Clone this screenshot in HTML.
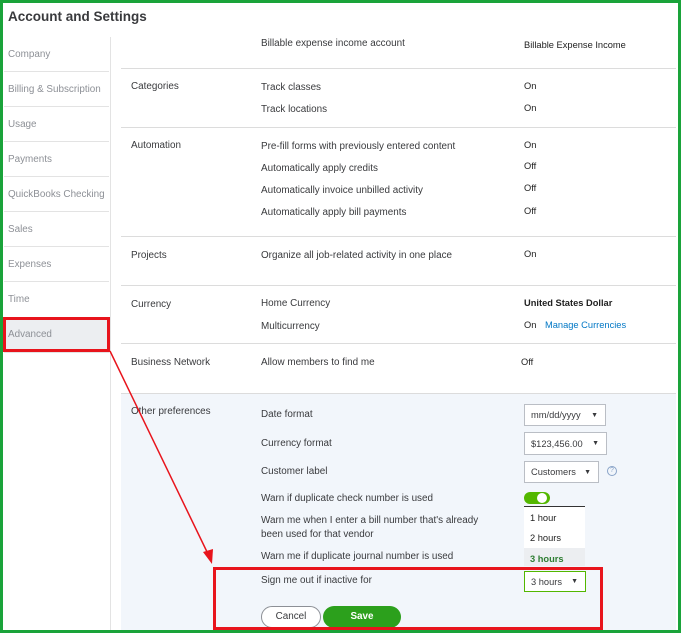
<!DOCTYPE html>
<html><head><style>
*{margin:0;padding:0;box-sizing:border-box}
body{width:681px;height:633px;overflow:hidden;background:#fff;font-family:"Liberation Sans",sans-serif;color:#393a3d;position:relative}
.a{position:absolute;white-space:nowrap}
.t{font-size:9.9px;color:#393a3d}
.h{font-size:9.9px;color:#393a3d}
.v{font-size:9.3px;color:#222}
.sb{font-size:9.9px;color:#8d9096}
.hl{position:absolute;left:121px;width:555px;height:1px;background:#dcdcdc}
.sl{position:absolute;left:4px;width:105px;height:1px;background:#e3e3e3}
.sel{position:absolute;background:#fff;border:1px solid #babec5;font-size:9.3px;color:#393a3d;padding:0 0 0 6px;display:flex;align-items:center}
.sel i{position:absolute;right:7px;font-style:normal;font-size:7px}
</style></head><body>
<div class="a" style="left:0;top:0;width:681px;height:633px;border:3px solid #1aa33a"></div>
<div class="a" style="left:8px;top:9px;font-size:13.5px;font-weight:bold;color:#393a3d">Account and Settings</div>
<div class="a" style="left:110px;top:37px;width:1px;height:593px;background:#e3e3e3"></div>
<div class="a" style="left:4px;top:318px;width:106px;height:34px;background:#eceef1"></div>
<div class="sl" style="top:71px"></div><div class="sl" style="top:106px"></div><div class="sl" style="top:141px"></div><div class="sl" style="top:176px"></div><div class="sl" style="top:211px"></div><div class="sl" style="top:246px"></div><div class="sl" style="top:281px"></div><div class="sl" style="top:317px"></div><div class="sl" style="top:352px"></div>
<div class="a sb" style="left:8px;top:49px">Company</div>
<div class="a sb" style="left:8px;top:84px">Billing &amp; Subscription</div>
<div class="a sb" style="left:8px;top:119px">Usage</div>
<div class="a sb" style="left:8px;top:154px">Payments</div>
<div class="a sb" style="left:8px;top:189px">QuickBooks Checking</div>
<div class="a sb" style="left:8px;top:224px">Sales</div>
<div class="a sb" style="left:8px;top:259px">Expenses</div>
<div class="a sb" style="left:8px;top:294px">Time</div>
<div class="a sb" style="left:8px;top:329px">Advanced</div>
<div class="a" style="left:121px;top:393px;width:555px;height:237px;background:#f2f6fb"></div>
<div class="hl" style="top:68px"></div><div class="hl" style="top:127px"></div><div class="hl" style="top:236px"></div><div class="hl" style="top:285px"></div><div class="hl" style="top:343px"></div><div class="hl" style="top:393px"></div>
<div class="a t" style="left:261px;top:38px">Billable expense income account</div>
<div class="a v" style="left:524px;top:40px">Billable Expense Income</div>
<div class="a h" style="left:131px;top:81px">Categories</div>
<div class="a t" style="left:261px;top:82px">Track classes</div><div class="a v" style="left:524px;top:81px">On</div>
<div class="a t" style="left:261px;top:104px">Track locations</div><div class="a v" style="left:524px;top:103px">On</div>
<div class="a h" style="left:131px;top:140px">Automation</div>
<div class="a t" style="left:261px;top:141px">Pre-fill forms with previously entered content</div><div class="a v" style="left:524px;top:140px">On</div>
<div class="a t" style="left:261px;top:163px">Automatically apply credits</div><div class="a v" style="left:524px;top:161px">Off</div>
<div class="a t" style="left:261px;top:185px">Automatically invoice unbilled activity</div><div class="a v" style="left:524px;top:183px">Off</div>
<div class="a t" style="left:261px;top:207px">Automatically apply bill payments</div><div class="a v" style="left:524px;top:206px">Off</div>
<div class="a h" style="left:131px;top:250px">Projects</div>
<div class="a t" style="left:261px;top:250px">Organize all job-related activity in one place</div><div class="a v" style="left:524px;top:249px">On</div>
<div class="a h" style="left:131px;top:299px">Currency</div>
<div class="a t" style="left:261px;top:298px">Home Currency</div><div class="a v" style="left:524px;top:298px;font-weight:bold">United States Dollar</div>
<div class="a t" style="left:261px;top:321px">Multicurrency</div><div class="a v" style="left:524px;top:320px">On <span style="color:#0077c5;margin-left:6px">Manage Currencies</span></div>
<div class="a h" style="left:131px;top:357px">Business Network</div>
<div class="a t" style="left:261px;top:357px">Allow members to find me</div><div class="a v" style="left:521px;top:357px">Off</div>
<div class="a h" style="left:131px;top:406px">Other preferences</div>
<div class="a t" style="left:261px;top:409px">Date format</div>
<div class="sel" style="left:524px;top:404px;width:82px;height:22px">mm/dd/yyyy<i>▼</i></div>
<div class="a t" style="left:261px;top:438px">Currency format</div>
<div class="sel" style="left:524px;top:432px;width:83px;height:23px">$123,456.00<i>▼</i></div>
<div class="a t" style="left:261px;top:466px">Customer label</div>
<div class="sel" style="left:524px;top:461px;width:75px;height:22px">Customers<i>▼</i></div>
<div class="a" style="left:607px;top:466px;width:10px;height:10px;border:1px solid #8aa4c8;border-radius:50%;font-size:7px;color:#8aa4c8;text-align:center;line-height:8px">?</div>
<div class="a t" style="left:261px;top:493px">Warn if duplicate check number is used</div>
<div class="a" style="left:524px;top:492px;width:26px;height:12px;border-radius:6px;background:#53b700"></div>
<div class="a" style="left:537px;top:493px;width:10px;height:10px;border-radius:50%;background:#fff"></div>
<div class="a" style="left:524px;top:506px;width:61px;height:60px;background:#fff;border-top:1px solid #333"></div>
<div class="a" style="left:524px;top:548px;width:61px;height:18px;background:#eceef1"></div>
<div class="a v" style="left:530px;top:513px">1 hour</div>
<div class="a v" style="left:530px;top:533px">2 hours</div>
<div class="a v" style="left:530px;top:554px;color:#2e7d32;font-weight:bold">3 hours</div>
<div class="a t" style="left:261px;top:515px">Warn me when I enter a bill number that's already</div>
<div class="a t" style="left:261px;top:529px">been used for that vendor</div>
<div class="a t" style="left:261px;top:551px">Warn me if duplicate journal number is used</div>
<div class="a t" style="left:261px;top:575px">Sign me out if inactive for</div>
<div class="sel" style="left:524px;top:571px;width:62px;height:21px;border-color:#53b700">3 hours<i>▼</i></div>
<div class="a" style="left:261px;top:606px;width:60px;height:22px;border:1px solid #8d9096;border-radius:12px;background:#fff;font-size:9.9px;text-align:center;line-height:20px;color:#393a3d">Cancel</div>
<div class="a" style="left:323px;top:606px;width:78px;height:22px;border-radius:12px;background:#2ca01c;font-size:9.9px;font-weight:bold;text-align:center;line-height:22px;color:#fff">Save</div>
<div class="a" style="left:3px;top:317px;width:107px;height:35px;border:3px solid #e8141c"></div>
<div class="a" style="left:213px;top:567px;width:390px;height:63px;border:3px solid #e8141c"></div>
<svg class="a" style="left:0;top:0" width="681" height="633"><line x1="110" y1="351" x2="209" y2="556" stroke="#e8141c" stroke-width="1.5"/><polygon points="212,564 203,552 213,549" fill="#e8141c"/></svg>
</body></html>
